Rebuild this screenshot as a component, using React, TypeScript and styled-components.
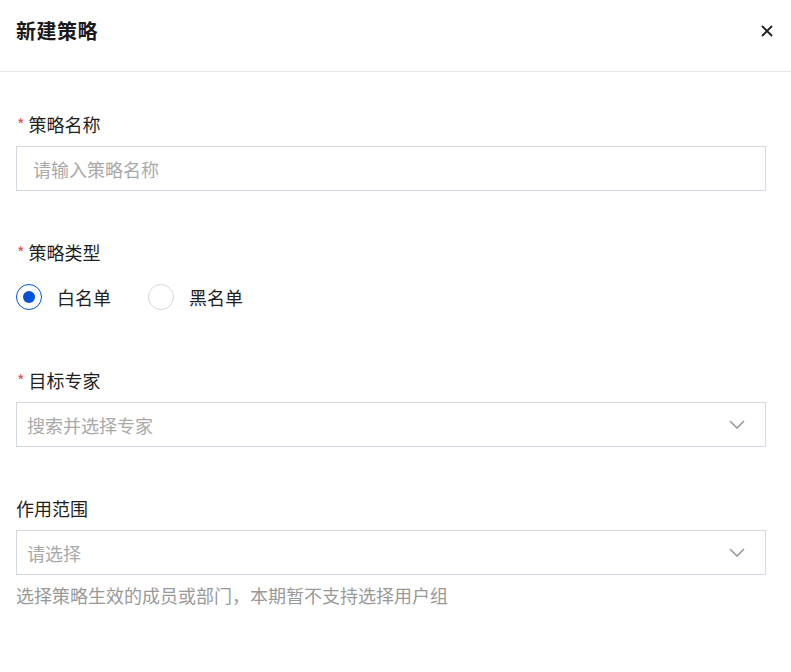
import { useState } from "react";
import styled, { createGlobalStyle } from "styled-components";

const GlobalStyle = createGlobalStyle`
  body {
    margin: 0;
    background: #fff;
    font-family: "Noto Sans CJK SC", "Noto Sans", sans-serif;
    color: #1f1f1f;
  }
`;

const Drawer = styled.div`
  width: 791px;
  background: #fff;
`;

const Header = styled.div`
  display: flex;
  align-items: center;
  justify-content: space-between;
  padding: 0 16px;
  border-bottom: 1px solid #e7e7e7;
  box-sizing: border-box;
  height: 72px;
`;

const Title = styled.h2`
  margin: -10px 0 0;
  font-size: 20px;
  font-weight: 700;
  line-height: 28px;
  letter-spacing: 0.5px;
  color: #1a1a1a;
`;

const CloseButton = styled.button`
  border: 0;
  background: none;
  padding: 0;
  width: 24px;
  height: 24px;
  display: flex;
  align-items: center;
  justify-content: center;
  cursor: pointer;
  margin: -10px -4px 0 0;
`;

const Body = styled.div`
  padding: 40px 25px 0 16px;
`;

const Field = styled.div`
  margin-bottom: 49px;
`;

const Label = styled.div<{ $required?: boolean }>`
  height: 24px;
  display: flex;
  align-items: center;
  font-size: 18px;
  margin-bottom: 10px;
  color: #1f1f1f;
  &::before {
    content: ${(p) => (p.$required ? '"*"' : "none")};
    color: #e34d59;
    font-size: 16px;
    margin: 0 4px 0 1px;
  }
`;

const Input = styled.input`
  display: block;
  width: 100%;
  height: 45px;
  box-sizing: border-box;
  border: 1px solid #d3d8e2;
  padding: 0 16px;
  font-size: 18px;
  font-family: inherit;
  color: #1f1f1f;
  outline: none;
  &::placeholder {
    color: #a9a9a9;
  }
`;

const Select = styled.div`
  height: 45px;
  box-sizing: border-box;
  border: 1px solid #d3d8e2;
  display: flex;
  align-items: center;
  justify-content: space-between;
  padding: 0 20px 0 10px;
  font-size: 18px;
  color: #a9a9a9;
  cursor: pointer;
`;

const RadioGroup = styled.div`
  height: 45px;
  display: flex;
  align-items: center;
  gap: 37px;
`;

const RadioItem = styled.label`
  display: flex;
  align-items: center;
  gap: 15px;
  font-size: 18px;
  line-height: 24px;
  cursor: pointer;
`;

const RadioCircle = styled.span<{ $checked: boolean }>`
  width: 26px;
  height: 26px;
  box-sizing: border-box;
  border-radius: 50%;
  border: 1px solid ${(p) => (p.$checked ? "#0052d9" : "#d3d8e2")};
  display: flex;
  align-items: center;
  justify-content: center;
  &::after {
    content: "";
    width: 12px;
    height: 12px;
    border-radius: 50%;
    background: #0052d9;
    display: ${(p) => (p.$checked ? "block" : "none")};
  }
`;

const Tip = styled.div`
  margin-top: 8px;
  font-size: 18px;
  line-height: 24px;
  color: #999;
`;

function Chevron() {
  return (
    <svg width="16" height="9" viewBox="0 0 16 9" fill="none">
      <path d="M1 1l7 7 7-7" stroke="#9a9a9a" strokeWidth="1.6" />
    </svg>
  );
}

function CloseIcon() {
  return (
    <svg width="12" height="12" viewBox="0 0 12 12" fill="none">
      <path d="M1 1l10 10M11 1L1 11" stroke="#1f1f1f" strokeWidth="1.8" />
    </svg>
  );
}

const types = ["白名单", "黑名单"];

export default function App() {
  const [type, setType] = useState("白名单");

  return (
    <Drawer>
      <GlobalStyle />
      <Header>
        <Title>新建策略</Title>
        <CloseButton aria-label="close">
          <CloseIcon />
        </CloseButton>
      </Header>
      <Body>
        <Field>
          <Label $required>策略名称</Label>
          <Input placeholder="请输入策略名称" />
        </Field>
        <Field>
          <Label $required>策略类型</Label>
          <RadioGroup>
            {types.map((t) => (
              <RadioItem key={t} onClick={() => setType(t)}>
                <RadioCircle $checked={type === t} />
                {t}
              </RadioItem>
            ))}
          </RadioGroup>
        </Field>
        <Field>
          <Label $required>目标专家</Label>
          <Select>
            搜索并选择专家
            <Chevron />
          </Select>
        </Field>
        <Field>
          <Label>作用范围</Label>
          <Select>
            请选择
            <Chevron />
          </Select>
          <Tip>选择策略生效的成员或部门，本期暂不支持选择用户组</Tip>
        </Field>
      </Body>
    </Drawer>
  );
}
